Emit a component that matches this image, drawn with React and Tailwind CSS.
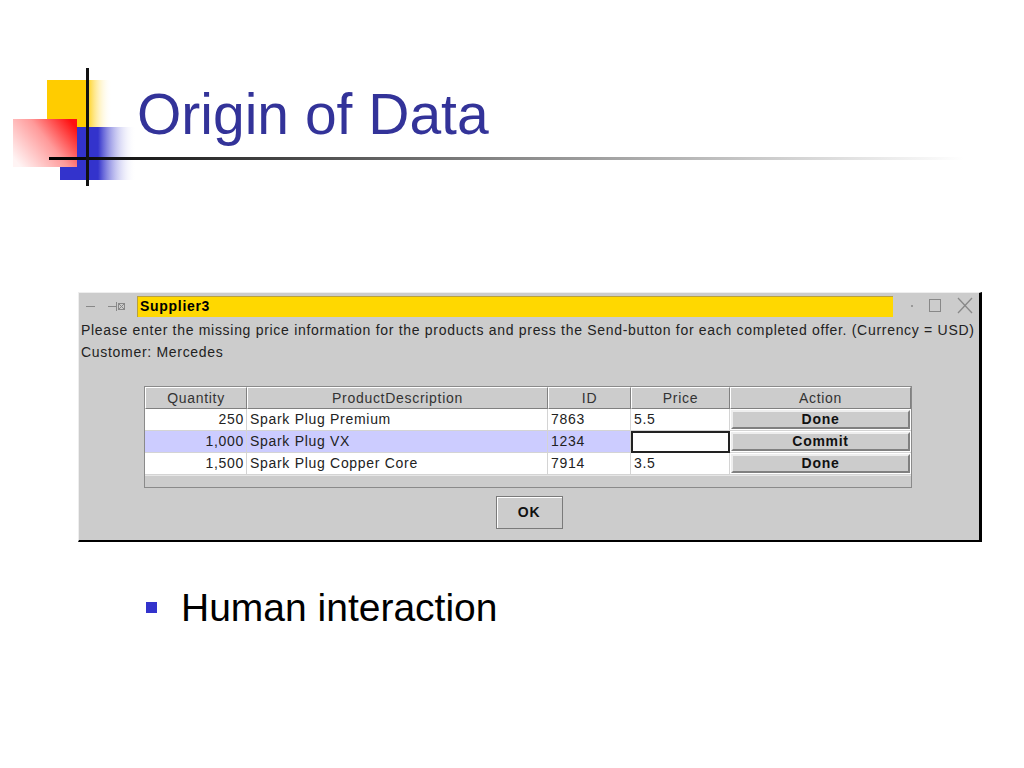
import React from 'react';

const columns = [
  { label: 'Quantity', width: 'w-[102px]' },
  { label: 'ProductDescription', width: 'w-[301px]' },
  { label: 'ID', width: 'w-[83px]' },
  { label: 'Price', width: 'w-[99px]' },
  { label: 'Action', width: 'w-[181px]' },
];

const rows = [
  { qty: '250', desc: 'Spark Plug Premium', id: '7863', price: '5.5', action: 'Done' },
  { qty: '1,000', desc: 'Spark Plug VX', id: '1234', price: '', action: 'Commit', selected: true },
  { qty: '1,500', desc: 'Spark Plug Copper Core', id: '7914', price: '3.5', action: 'Done' },
];

function Decoration() {
  return (
    <svg className="absolute left-0 top-0" width="1024" height="200" viewBox="0 0 1024 200">
      <defs>
        <linearGradient id="yel" x1="0" y1="0" x2="1" y2="0">
          <stop offset="0" stopColor="#ffcc00" />
          <stop offset="0.6" stopColor="#ffcc00" />
          <stop offset="1" stopColor="#ffffff" stopOpacity="0" />
        </linearGradient>
        <linearGradient id="blu" x1="0" y1="0" x2="1" y2="0">
          <stop offset="0" stopColor="#3333cc" />
          <stop offset="0.5" stopColor="#3333cc" />
          <stop offset="1" stopColor="#ffffff" stopOpacity="0" />
        </linearGradient>
        <linearGradient id="red" x1="1" y1="0.2" x2="0" y2="0.8">
          <stop offset="0" stopColor="#ff1010" />
          <stop offset="0.45" stopColor="#ff9a9a" />
          <stop offset="1" stopColor="#fff4f4" />
        </linearGradient>
        <linearGradient id="hline" x1="0" y1="0" x2="1" y2="0">
          <stop offset="0" stopColor="#000000" />
          <stop offset="0.5" stopColor="#888888" />
          <stop offset="1" stopColor="#ffffff" />
        </linearGradient>
      </defs>
      <rect x="47" y="80" width="65" height="50" fill="url(#yel)" />
      <rect x="60" y="127" width="76" height="53" fill="url(#blu)" />
      <rect x="13" y="119" width="64" height="48" fill="url(#red)" />
      <rect x="49" y="157" width="915" height="3" fill="url(#hline)" />
      <rect x="86" y="68" width="3" height="118" fill="#111" />
    </svg>
  );
}

function TitleBar() {
  return (
    <div className="flex h-[26px] items-center">
      <svg className="ml-[7px] shrink-0" width="51" height="16" viewBox="0 0 51 16">
        <line x1="0" y1="8.5" x2="9" y2="8.5" stroke="#888" strokeWidth="1" />
        <line x1="22" y1="8.5" x2="30" y2="8.5" stroke="#888" strokeWidth="1" />
        <line x1="30.5" y1="4" x2="30.5" y2="13" stroke="#888" strokeWidth="1" />
        <rect x="32.5" y="5.5" width="6" height="6" fill="none" stroke="#888" strokeWidth="1" />
        <line x1="32.5" y1="5.5" x2="38.5" y2="11.5" stroke="#888" strokeWidth="1" />
        <line x1="38.5" y1="5.5" x2="32.5" y2="11.5" stroke="#888" strokeWidth="1" />
      </svg>
      <div className="flex h-[21px] flex-1 items-center border-l border-t border-[#b8a040] bg-[#ffd800] pl-[2px] text-[14px] font-bold text-black">
        Supplier3
      </div>
      <svg className="shrink-0" width="86" height="20" viewBox="0 0 86 20">
        <rect x="18" y="9" width="2" height="2" fill="#999" />
        <rect x="36.5" y="3.5" width="11" height="12" fill="none" stroke="#888" strokeWidth="1" />
        <line x1="65" y1="2" x2="79" y2="17" stroke="#888" strokeWidth="1.3" />
        <line x1="79" y1="2" x2="65" y2="17" stroke="#888" strokeWidth="1.3" />
      </svg>
    </div>
  );
}

function SupplierTable() {
  return (
    <div className="ml-[65px] mt-[23px] w-[768px] border border-[#8a8a8a] bg-[#cccccc]">
      <div className="flex h-[22px]">
        {columns.map(c => (
          <div
            key={c.label}
            className={`${c.width} flex items-center justify-center border-l border-t border-r border-b border-l-white border-t-white border-r-[#808080] border-b-[#808080] text-[14px] text-[#333]`}
          >
            {c.label}
          </div>
        ))}
      </div>
      {rows.map(r => (
        <div key={r.id} className={`flex h-[22px] ${r.selected ? 'bg-[#ccccff]' : 'bg-white'}`}>
          <div className="flex w-[102px] items-center justify-end border-b border-r border-[#d4d4d4] pr-[2px] text-[14px] text-[#222]">
            {r.qty}
          </div>
          <div className="flex w-[301px] items-center border-b border-r border-[#d4d4d4] pl-[3px] text-[14px] text-[#222]">
            {r.desc}
          </div>
          <div className="flex w-[83px] items-center border-b border-r border-[#d4d4d4] pl-[3px] text-[14px] text-[#222]">
            {r.id}
          </div>
          {r.selected ? (
            <div className="flex w-[99px] items-center border-2 border-[#222] bg-white pl-[2px] text-[14px]" />
          ) : (
            <div className="flex w-[99px] items-center border-b border-r border-[#d4d4d4] bg-white pl-[3px] text-[14px] text-[#222]">
              {r.price}
            </div>
          )}
          <div className="flex w-[181px] items-stretch border-b border-[#d4d4d4] bg-white p-[1px]">
            <div className="flex flex-1 items-center justify-center border-2 border-l-[#eeeeee] border-t-[#eeeeee] border-r-[#808080] border-b-[#808080] bg-[#cccccc] text-[14px] font-bold text-[#111]">
              {r.action}
            </div>
          </div>
        </div>
      ))}
      <div className="h-[12px] border-t border-[#e6e6e6]" />
    </div>
  );
}

export default function App() {
  return (
    <div className="relative h-[768px] w-[1024px] overflow-hidden bg-white" style={{ fontFamily: '"Liberation Sans", Arial, sans-serif' }}>
      <div className="relative h-[200px]">
        <Decoration />
        <h1 className="relative pl-[137px] pt-[86px] text-[57px] leading-none font-normal text-[#333399]">
          Origin of Data
        </h1>
      </div>

      <div className="ml-[78px] mt-[92px] h-[250px] w-[904px] border-b-2 border-l border-r-[3px] border-t border-b-black border-l-[#eeeeee] border-r-black border-t-[#eeeeee] bg-[#cccccc] tracking-[0.7px]">
        <TitleBar />
        <div className="whitespace-nowrap pl-[2px] text-[14px] leading-[22px] text-[#222]">
          Please enter the missing price information for the products and press the Send-button for each completed offer. (Currency = USD)
        </div>
        <div className="pl-[2px] text-[14px] leading-[22px] text-[#222]">Customer: Mercedes</div>
        <SupplierTable />
        <div className="mt-[8px] flex justify-center">
          <div className="flex h-[33px] w-[67px] items-center justify-center border border-[#7a7a7a] bg-[#cccccc] text-[14px] font-bold text-[#111] shadow-[inset_1px_1px_0_#ffffff]">
            OK
          </div>
        </div>
      </div>

      <div className="ml-[146px] mt-[46px] flex items-center">
        <div className="h-[11px] w-[11px] bg-[#3333cc]" />
        <div className="ml-[24px] text-[39px] leading-none text-black">Human interaction</div>
      </div>
    </div>
  );
}
